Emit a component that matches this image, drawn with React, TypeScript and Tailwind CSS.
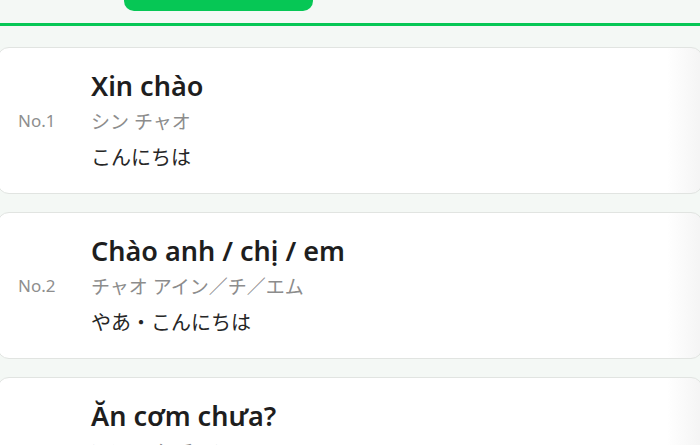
import React from 'react';

type Phrase = { no: number; vi: string; kana: string; ja: string };

const phrases: Phrase[] = [
  { no: 1, vi: 'Xin chào', kana: 'シン チャオ', ja: 'こんにちは' },
  { no: 2, vi: 'Chào anh / chị / em', kana: 'チャオ アイン／チ／エム', ja: 'やあ・こんにちは' },
  { no: 3, vi: 'Ăn cơm chưa?', kana: 'アン コム チュア', ja: 'ごはん食べた？' },
];

const font = { fontFamily: '"Noto Sans", "Noto Sans CJK JP", sans-serif' };

const App: React.FC = () => {
  return (
    <div className="h-[445px] w-[700px] overflow-hidden bg-[#f4f8f5]" style={font}>
      <div className="ml-[124px] h-[11px] w-[189px] rounded-b-[10px] bg-[#06c755]" />
      <div className="mt-[12px] h-[3px] bg-[#06c755]" />
      <div className="-mx-[3px] mt-[21px] flex flex-col gap-[18px]">
        {phrases.map(p => (
          <div
            key={p.no}
            className="flex h-[147px] shrink-0 items-center rounded-[12px] border border-[#e1e4e1] bg-[linear-gradient(to_right,#ffffff_95%,#f4f4f4)] pl-[20px]"
          >
            <div className="w-[73px] pt-[1px] text-[17px] text-[#8e8e8e]">No.{p.no}</div>
            <div className="flex flex-col pt-[2px]">
              <div className="text-[27px] leading-[36px] font-semibold text-[#1e1e1e]">{p.vi}</div>
              <div className="text-[19px] leading-[36px] text-[#8c8c8c]">{p.kana}</div>
              <div className="text-[20px] leading-[36px] text-[#262626]">{p.ja}</div>
            </div>
          </div>
        ))}
      </div>
    </div>
  );
};

export default App;
